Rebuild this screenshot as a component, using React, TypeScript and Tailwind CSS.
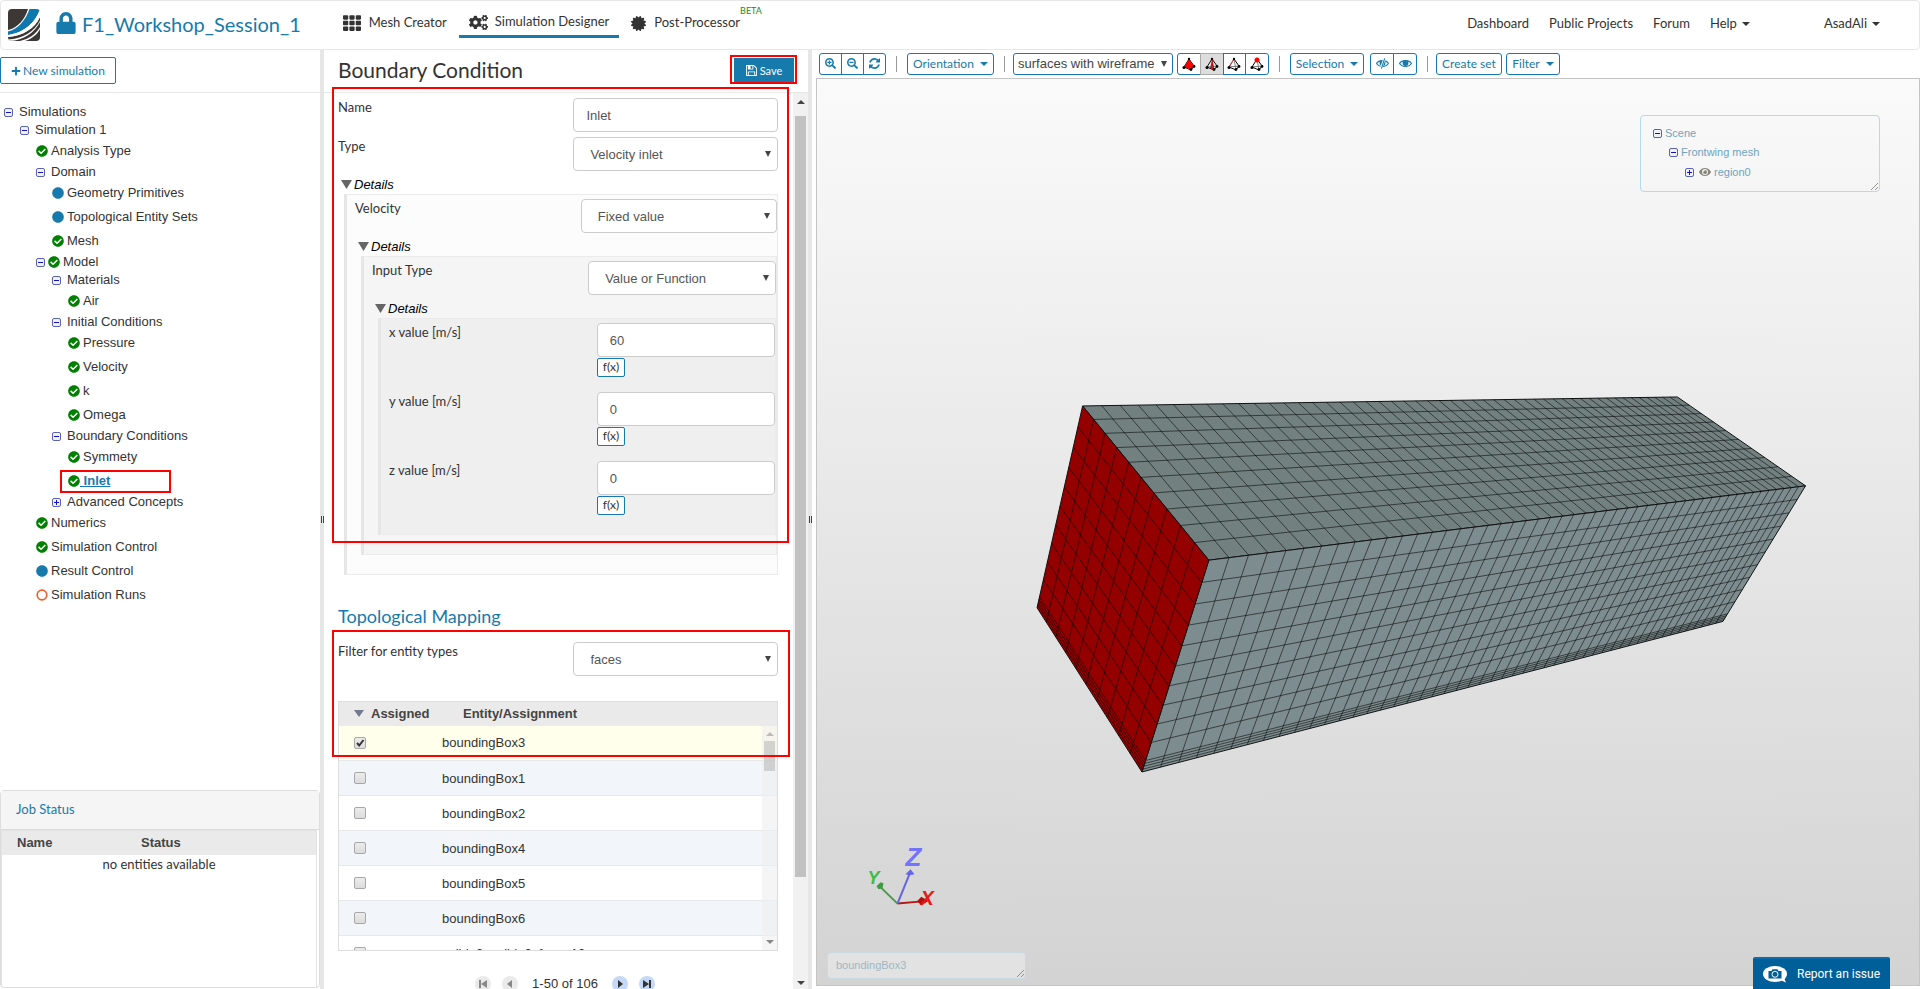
import React, { useState } from 'react';
import {
  FaCertificate,
  FaCheckCircle,
  FaCircle,
  FaCogs,
  FaEye,
  FaLock,
  FaPlus,
  FaSearchMinus,
  FaSearchPlus,
  FaTh,
} from 'react-icons/fa';

type TreeNode = {
  label: string;
  level: number;
  toggle?: 'open' | 'closed';
  status?: 'ok' | 'info' | 'empty';
  selected?: boolean;
};

const treeNodes: TreeNode[] = [
  { label: 'Simulations', level: 0, toggle: 'open' },
  { label: 'Simulation 1', level: 1, toggle: 'open' },
  { label: 'Analysis Type', level: 2, status: 'ok' },
  { label: 'Domain', level: 2, toggle: 'open' },
  { label: 'Geometry Primitives', level: 3, status: 'info' },
  { label: 'Topological Entity Sets', level: 3, status: 'info' },
  { label: 'Mesh', level: 3, status: 'ok' },
  { label: 'Model', level: 2, toggle: 'open', status: 'ok' },
  { label: 'Materials', level: 3, toggle: 'open' },
  { label: 'Air', level: 4, status: 'ok' },
  { label: 'Initial Conditions', level: 3, toggle: 'open' },
  { label: 'Pressure', level: 4, status: 'ok' },
  { label: 'Velocity', level: 4, status: 'ok' },
  { label: 'k', level: 4, status: 'ok' },
  { label: 'Omega', level: 4, status: 'ok' },
  { label: 'Boundary Conditions', level: 3, toggle: 'open' },
  { label: 'Symmety', level: 4, status: 'ok' },
  { label: 'Inlet', level: 4, status: 'ok', selected: true },
  { label: 'Advanced Concepts', level: 3, toggle: 'closed' },
  { label: 'Numerics', level: 2, status: 'ok' },
  { label: 'Simulation Control', level: 2, status: 'ok' },
  { label: 'Result Control', level: 2, status: 'info' },
  { label: 'Simulation Runs', level: 2, status: 'empty' },
];

const indents = ['pl-1', 'pl-5', 'pl-9', 'pl-13', 'pl-17'];

const entities = [
  'boundingBox3',
  'boundingBox1',
  'boundingBox2',
  'boundingBox4',
  'boundingBox5',
  'boundingBox6',
  'solid_0_solid_0_face_10',
];

const Caret = () => (
  <svg viewBox="0 0 8 4" className="w-2 h-1 shrink-0" fill="currentColor" aria-hidden="true">
    <path d="M0 0h8L4 4z" />
  </svg>
);

const Logo = () => (
  <svg viewBox="0 0 32 32" className="w-8 h-8" aria-hidden="true">
    <defs>
      <clipPath id="logo-clip">
        <rect width="32" height="32" rx="4" />
      </clipPath>
    </defs>
    <g clipPath="url(#logo-clip)">
      <rect width="32" height="32" fill="#3d3835" />
      <path d="M0 21C10 19 17 10 20 0H32V8C27 19 15 27 0 28Z" fill="#fff" />
      <path d="M0 22.500C11 20 18 10 21.500 0H32C28 13 16 24 0 26Z" fill="#0d77ae" />
      <path d="M32 0C28 13 16 24 0 26V28C15 27 27 19 32 8Z" fill="#fff" />
      <path d="M0 30.500C15 30 27 22 32 11.500V13C27 23.500 15 31.500 2 32H0Z" fill="#fff" />
      <path d="M12 32C21 30 28 25 32 18V20C29 26 23 30 17 32Z" fill="#fff" />
    </g>
  </svg>
);

const SaveIcon = () => (
  <svg viewBox="128 128 1536 1536" className="w-[11px] h-[11px]" fill="currentColor" aria-hidden="true">
    <path d="M512 1536h768v-384H512v384zm896 0h128V640q0-14-10-38.500t-20-34.500l-281-281q-10-10-34-20t-39-10v416q0 40-28 68t-68 28H480q-40 0-68-28t-28-68V256H256v1280h128v-416q0-40 28-68t68-28h832q40 0 68 28t28 68v416zM1024 608V288q0-13-9.500-22.500T992 256H800q-13 0-22.500 9.500T768 288v320q0 13 9.500 22.500T800 640h192q13 0 22.500-9.500t9.500-22.500zm640 32v928q0 40-28 68t-68 28H224q-40 0-68-28t-28-68V224q0-40 28-68t68-28h928q40 0 88 20t76 48l280 280q28 28 48 76t20 88z" />
  </svg>
);

const RefreshIcon = () => (
  <svg viewBox="0 0 1536 1536" className="w-[11px] h-[11px]" fill="currentColor" aria-hidden="true">
    <path d="M1511 928q0 5-1 7-64 268-268 434.500T764 1536q-146 0-282.500-55T238 1324l-129 129q-19 19-45 19t-45-19-19-45V960q0-26 19-45t45-19h448q26 0 45 19t19 45-19 45l-137 137q71 66 161 102t187 36q134 0 250-65t186-179q11-17 53-117 8-23 30-23h192q13 0 22.500 9.500t9.500 22.500zm25-800v448q0 26-19 45t-45 19h-448q-26 0-45-19t-19-45 19-45l138-138Q969 256 768 256q-134 0-250 65T332 500q-11 17-53 117-8 23-30 23H50q-13 0-22.500-9.500T18 608v-7q65-268 270-434.500T768 0q146 0 284 55.500T1297 212l130-129q19-19 45-19t45 19 19 45z" />
  </svg>
);

const EyeIcon = ({ half = false }: { half?: boolean }) => (
  <svg viewBox="0 0 12 10" className="w-[13px] h-[11px]" fill="none" stroke="currentColor" aria-hidden="true">
    <path d="M.5 5C2.500 1.500 9.500 1.500 11.500 5 9.500 8.500 2.500 8.500.5 5Z" strokeWidth="1" />
    <circle cx="6" cy="4.500" r="2.700" fill="currentColor" stroke="none" />
    {half && <path d="M8 0L4.500 10" stroke="#fff" strokeWidth="2.200" />}
    {half && <path d="M8 .3L5 9.700" strokeWidth="1" />}
  </svg>
);

// Tetrahedron with the picked part (volume, face, edge, vertex) in red
const PickIcon = ({ mode }: { mode: string }) => (
  <svg viewBox="0 0 14 14" className="w-3.5 h-3.5" aria-hidden="true">
    <path d="M7 2L2 10L9 13L12 9Z" fill={mode === 'volume' ? '#f00' : '#fff'} stroke="#000" strokeWidth="1" />
    {mode === 'volume' && <path d="M7 2L2 10L9 13L12 9Z" fill="#f00" />}
    {mode === 'face' && <path d="M7 2L5 11L9 13Z" fill="#f00" />}
    {mode !== 'volume' && <path d="M2 10L12 9" stroke="#555" strokeWidth=".8" fill="none" />}
    {mode !== 'volume' && <path d="M7 2L9 13" stroke={mode === 'face' ? '#900' : '#666'} strokeWidth=".8" />}
    {mode === 'edge' && <path d="M7 2L2.500 9.500" stroke="#f44" strokeWidth="1" />}
    <circle cx="2" cy="10.500" r="1.500" />
    <circle cx="9" cy="12.500" r="1.400" />
    <circle cx="12" cy="9.500" r="1.400" />
    {mode === 'vertex' ? <circle cx="7" cy="3" r="2.500" fill="#f00" /> : <circle cx="7" cy="2" r="1.200" />}
  </svg>
);

const Toggle = ({ open }: { open: boolean }) => (
  <svg viewBox="0 0 9 9" className="w-[9px] h-[9px] shrink-0" aria-hidden="true">
    <rect x=".5" y=".5" width="8" height="8" rx="1.500" fill="#f0f2fa" stroke="#5a63b0" />
    <path d={open ? 'M2 4.500h5' : 'M2 4.500h5M4.500 2v5'} stroke="#1512b8" />
  </svg>
);

const StatusIcon = ({ status }: { status: string }) => {
  if (status === 'ok') return <FaCheckCircle className="w-3 h-3 shrink-0 text-[#008000]" />;
  if (status === 'info') return <FaCircle className="w-3 h-3 shrink-0 text-[#167aac]" />;
  return (
    <svg viewBox="0 0 12 12" className="w-3 h-3 shrink-0" aria-hidden="true">
      <circle cx="6" cy="6" r="4.800" fill="none" stroke="#e8622c" strokeWidth="1.700" />
    </svg>
  );
};

const TreeRow = ({ node }: { node: TreeNode }) => (
  <li className={`relative flex items-center ${node.toggle ? 'h-[18px]' : 'h-6'} ${indents[node.level]}`}>
    {node.toggle && (
      <button aria-label={`Toggle ${node.label}`} className={node.status ? 'mr-[3px]' : 'mr-1.5'}>
        <Toggle open={node.toggle === 'open'} />
      </button>
    )}
    {node.status && <StatusIcon status={node.status} />}
    {node.selected ? (
      <a href="#inlet" className="font-bold underline text-[#167aac] whitespace-pre">{' ' + node.label}</a>
    ) : (
      <a href="#node" className={node.status ? 'ml-[3px]' : ''}>{node.label}</a>
    )}
    {node.selected && <span className="absolute left-[60px] top-px w-[111px] h-[23px] border-2 border-[#f00] pointer-events-none" />}
  </li>
);

const fieldClass = 'block w-full h-[34px] pt-px bg-white border border-[#ccc] rounded text-[13px] text-[#555]';

const SelectBox = ({ id, value }: { id: string; value: string }) => (
  <div className="relative w-[46.5%]">
    <select id={id} defaultValue={value} className={`${fieldClass} appearance-none pl-4`}>
      <option>{value}</option>
    </select>
    <svg viewBox="0 0 6 6" className="absolute right-[7px] top-3.5 w-1.5 h-1.5 pointer-events-none" fill="#444" aria-hidden="true">
      <path d="M0 0h6L3 6z" />
    </svg>
  </div>
);

const FieldRow = ({ id, label, children }: { id: string; label: string; children: React.ReactNode }) => (
  <div className="flex justify-between">
    <label htmlFor={id} className="font-[Lato,sans-serif] leading-[18px] text-[#333]">{label}</label>
    {children}
  </div>
);

const Details = ({ shade, children }: { shade: string; children: React.ReactNode }) => (
  <div className="pt-[5px]">
    <button className="flex items-center gap-0.5 h-[18px] pl-[3px] italic text-black">
      <svg viewBox="0 0 11 9" className="w-[11px] h-[9px]" fill="#666" aria-hidden="true">
        <path d="M0 0h11L5.500 9z" />
      </svg>
      Details
    </button>
    <div className={`ml-1.5 pl-2 pt-1 border border-[#ebebeb] border-l-3 border-l-[#e6e6e6] ${shade}`}>{children}</div>
  </div>
);

const FunctionField = ({ axis, value }: { axis: string; value: string }) => (
  <div className="pb-[15px]">
    <FieldRow id={`${axis}-value`} label={`${axis} value [m/s]`}>
      <div className="w-[46.2%]">
        <input id={`${axis}-value`} defaultValue={value} className={`${fieldClass} px-3`} />
        <button className="mt-px block h-[19px] px-[5px] bg-white border border-[#167aac] rounded-xs font-[Lato,sans-serif] text-xs leading-none text-[#333]">
          f(x)
        </button>
      </div>
    </FieldRow>
  </div>
);

const Splitter = () => (
  <div className="w-1 shrink-0 bg-[#e6e6e6] flex items-center justify-center gap-px">
    <span className="w-px h-[7px] bg-[#444]" />
    <span className="w-px h-[7px] bg-[#444]" />
  </div>
);

const EntityTable = () => {
  const [checked, setChecked] = useState<string[]>(['boundingBox3']);
  const flip = (name: string) =>
    setChecked(checked.includes(name) ? checked.filter((n) => n !== name) : [...checked, name]);

  return (
    <div className="relative mt-[25px] h-[250px] border border-[#ddd] overflow-hidden">
      <table className="w-full table-fixed">
        <thead>
          <tr className="h-6 bg-[#eaeaea] text-left text-[#444]">
            <th className="w-[103px] p-0 pl-[15px]">
              <span className="flex items-center gap-[7px]">
                <svg viewBox="0 0 10 7" className="w-2.5 h-[7px]" fill="#717a90" aria-hidden="true">
                  <path d="M0 0h10L5 7z" />
                </svg>
                Assigned
              </span>
            </th>
            <th className="p-0 pl-[21px]">Entity/Assignment</th>
          </tr>
        </thead>
        <tbody>
          {entities.map((name, index) => (
            <tr
              key={name}
              className={`h-[35px] border-b border-[#e6e8ea] ${index === 0 ? 'bg-[#ffffec]' : index % 2 ? 'bg-[#f2f6fb]' : 'bg-white'}`}
            >
              <td className="p-0 pl-[15px]">
                <span className="relative block w-3 h-3">
                  <input
                    type="checkbox"
                    id={name}
                    checked={checked.includes(name)}
                    onChange={() => flip(name)}
                    className="peer block w-3 h-3 appearance-none rounded-xs border border-[#a8a8a8] bg-linear-to-b from-[#ececec] to-[#dcdcdc]"
                  />
                  <svg viewBox="0 0 12 12" className="hidden peer-checked:block absolute inset-0 pointer-events-none" fill="none" stroke="#333" strokeWidth="2" aria-hidden="true">
                    <path d="M3 6l2.200 2.500L9.500 3" />
                  </svg>
                </span>
              </td>
              <td className="p-0"><label htmlFor={name}>{name}</label></td>
            </tr>
          ))}
        </tbody>
      </table>
      {/* list scrollbar */}
      <div className="absolute right-0 top-6 bottom-0 w-[15px] bg-[#eee]/60 flex flex-col items-center py-1.5 text-[#888]">
        <svg viewBox="0 0 8 4" className="w-2 h-1" fill="#bbb" aria-hidden="true"><path d="M0 4h8L4 0z" /></svg>
        <div className="mt-[5px] w-[11px] h-[30px] bg-[#bbb]/60" />
        <div className="grow" />
        <Caret />
      </div>
    </div>
  );
};

const Pager = () => {
  const round = 'w-4 h-4 rounded-full flex items-center justify-center';
  return (
    <div className="mt-[25px] flex items-center justify-center gap-[11px] pl-3.5">
      <button aria-label="First page" disabled className={`${round} bg-[#eaeaea] text-[#888]`}>
        <svg viewBox="0 0 8 8" className="w-2 h-2" fill="currentColor"><path d="M0 0h2v8H0zM8 0v8L2 4z" /></svg>
      </button>
      <button aria-label="Previous page" disabled className={`${round} bg-[#eaeaea] text-[#888]`}>
        <svg viewBox="0 0 8 8" className="w-2 h-2" fill="currentColor"><path d="M6 0v8L1 4z" /></svg>
      </button>
      <span className="px-[3px] leading-4 text-[#333]">1-50 of 106</span>
      <button aria-label="Next page" className={`${round} bg-[#c5d9f7] text-[#333]`}>
        <svg viewBox="0 0 8 8" className="w-2 h-2" fill="currentColor"><path d="M2 0v8l5-4z" /></svg>
      </button>
      <button aria-label="Last page" className={`${round} bg-[#c5d9f7] text-[#333]`}>
        <svg viewBox="0 0 8 8" className="w-2 h-2" fill="currentColor"><path d="M6 0h2v8H6zM0 0v8l6-4z" /></svg>
      </button>
    </div>
  );
};

type Point = [number, number];

// Projective map of the unit square onto a quad given as corners (0,0) (1,0) (1,1) (0,1)
const projector = ([p0, p1, p2, p3]: Point[]) => {
  const dx1 = p1[0] - p2[0];
  const dx2 = p3[0] - p2[0];
  const dy1 = p1[1] - p2[1];
  const dy2 = p3[1] - p2[1];
  const sx = p0[0] - p1[0] + p2[0] - p3[0];
  const sy = p0[1] - p1[1] + p2[1] - p3[1];
  const den = dx1 * dy2 - dx2 * dy1;
  const g = (sx * dy2 - dx2 * sy) / den;
  const h = (dx1 * sy - sx * dy1) / den;
  return (u: number, v: number) => {
    const w = 1 + g * u + h * v;
    const x = (p0[0] + (p1[0] * (1 + g) - p0[0]) * u + (p3[0] * (1 + h) - p0[0]) * v) / w;
    const y = (p0[1] + (p1[1] * (1 + g) - p0[1]) * u + (p3[1] * (1 + h) - p0[1]) * v) / w;
    return `${x.toFixed(1)} ${y.toFixed(1)}`;
  };
};

const even = (n: number) => Array.from({ length: n - 1 }, (_, i) => (i + 1) / n);

// Cells get thin close to the ground
const layers = [...Array.from({ length: 10 }, (_, i) => (i + 1) * 0.094), 0.955, 0.97, 0.985];

const MeshFace = ({ corners, us, vs, fill }: { corners: Point[]; us: number[]; vs: number[]; fill: string }) => {
  const at = projector(corners);
  const lines = [
    ...us.map((u) => `M${at(u, 0)}L${at(u, 1)}`),
    ...vs.map((v) => `M${at(0, v)}L${at(1, v)}`),
  ].join('');
  return (
    <g>
      <polygon points={corners.join(' ')} fill={fill} stroke="#111" strokeWidth="1" strokeLinejoin="round" />
      <path d={lines} stroke="#000" strokeOpacity=".55" strokeWidth="1" fill="none" />
    </g>
  );
};

const MeshView = () => {
  const a: Point = [265.3, 327.3];
  const b: Point = [219.7, 529.3];
  const c: Point = [324.7, 693.700];
  const d: Point = [391.7, 481.7];
  const e: Point = [860.7, 318.3];
  const f: Point = [989, 407.3];
  const g: Point = [906.3, 543];
  return (
    <svg viewBox="0 0 1102 907" className="block w-full h-full" aria-label="Mesh of the front wing domain">
      <MeshFace corners={[a, e, f, d]} us={even(50)} vs={even(10)} fill="#728080" />
      <MeshFace corners={[d, f, g, c]} us={even(50)} vs={layers} fill="#7d8c8e" />
      <MeshFace corners={[a, d, c, b]} us={even(10)} vs={layers} fill="#940000" />
      {/* orientation axes */}
      <g strokeWidth="2" fontFamily="Liberation Sans, sans-serif" fontWeight="bold" fontStyle="italic">
        <path d="M80 825.500L63 809" stroke="#4a9a4a" />
        <path d="M59 808l4-4 3 1-1 5-4 1z" fill="#3f9a45" />
        <path d="M80 825.500L102 823.500" stroke="#b01818" />
        <path d="M101 823l3-3 5 3-5 3z" fill="#b01010" stroke="#b01010" />
        <path d="M80 825.500L92 796" stroke="#6464e0" />
        <path d="M88 796l5-5 4 5-5 1z" fill="#6464f0" />
        <text x="50" y="806" fontSize="18" fill="#44bb44">Y</text>
        <text x="103" y="827" fontSize="20" fill="#e81818">X</text>
        <text x="88" y="788" fontSize="26" fill="#7373ff">Z</text>
      </g>
    </svg>
  );
};

const ResizeGrip = () => (
  <svg viewBox="0 0 8 8" className="absolute right-px bottom-px w-2 h-2" stroke="#777" strokeWidth=".8" aria-hidden="true">
    <path d="M1 8l7-7M5 8l3-3" />
  </svg>
);

const toolButton = 'h-[22px] flex items-center justify-center bg-white border border-[#167aac] text-[#167aac]';
const Separator = () => <div className="mx-2.5 w-px h-4 bg-[#999]" />;

const Toolbar = () => (
  <div className="flex items-center h-7 pl-[3px] font-[Lato,sans-serif] text-xs">
    <div className="flex w-[67px] -space-x-px">
      <button aria-label="Zoom in" className={`${toolButton} grow rounded-l-[3px]`}><FaSearchPlus className="w-[11px] h-[11px]" /></button>
      <button aria-label="Zoom out" className={`${toolButton} grow`}><FaSearchMinus className="w-[11px] h-[11px]" /></button>
      <button aria-label="Reset view" className={`${toolButton} grow rounded-r-[3px]`}><RefreshIcon /></button>
    </div>
    <Separator />
    <button className={`${toolButton} w-[87px] gap-1.5 rounded-[3px]`}>Orientation <Caret /></button>
    <Separator />
    <div className="relative -ml-0.5 w-[160px]">
      <select
        aria-label="Render mode"
        className="block w-full h-[22px] pl-1 appearance-none bg-white border border-[#167aac] rounded-[3px] font-[Liberation_Sans,sans-serif] text-[13px] text-[#444]"
      >
        <option>surfaces with wireframe</option>
      </select>
      <svg viewBox="0 0 6 6" className="absolute right-1.5 top-2 w-1.5 h-1.5 pointer-events-none" fill="#444" aria-hidden="true">
        <path d="M0 0h6L3 6z" />
      </svg>
    </div>
    <div className="ml-1 flex w-[92px] -space-x-px">
      <button aria-label="Pick volumes" className={`${toolButton} grow rounded-l-[3px]`}><PickIcon mode="volume" /></button>
      <button aria-label="Pick faces" className="h-[22px] grow flex items-center justify-center bg-[#ddd] border border-[#aaa]"><PickIcon mode="face" /></button>
      <button aria-label="Pick edges" className={`${toolButton} grow`}><PickIcon mode="edge" /></button>
      <button aria-label="Pick vertices" className={`${toolButton} grow rounded-r-[3px]`}><PickIcon mode="vertex" /></button>
    </div>
    <Separator />
    <button className={`${toolButton} w-[74px] gap-1.5 rounded-[3px]`}>Selection <Caret /></button>
    <div className="ml-1.5 flex w-[47px] -space-x-px">
      <button aria-label="Hide selection" className={`${toolButton} grow rounded-l-[3px]`}><EyeIcon half /></button>
      <button aria-label="Show all" className={`${toolButton} grow rounded-r-[3px]`}><EyeIcon /></button>
    </div>
    <Separator />
    <button className={`${toolButton} -ml-0.5 w-[66px] rounded-[3px]`}>Create set</button>
    <button className={`${toolButton} ml-1 w-[54px] gap-1.5 rounded-[3px]`}>Filter <Caret /></button>
  </div>
);

const Header = () => (
  <header className="flex h-[50px] shrink-0 border border-[#e7e7e7] rounded font-[Lato,sans-serif] text-[13px] text-[#333]">
    <div className="flex items-center pl-[7px] pb-px">
      <Logo />
      <FaLock className="ml-4 w-5 h-[22px] mb-1 text-[#167aac]" />
      <a href="#project" className="ml-1.5 mb-0.5 text-xl text-[#167aac]">F1_Workshop_Session_1</a>
    </div>
    <nav className="flex items-start ml-8 pt-2 whitespace-nowrap">
      <a href="#mesh" className="flex items-center gap-2 h-7 px-2.5">
        <FaTh className="w-[18px] h-[18px]" />
        Mesh Creator
      </a>
      <a href="#designer" className="flex items-center gap-[7px] h-[29px] px-2.5 ml-0.5 border-b-3 border-[#167aac]">
        <FaCogs className="w-[19px] h-[19px]" />
        Simulation Designer
      </a>
      <a href="#post" className="flex items-center gap-2 h-7 pl-3">
        <FaCertificate className="w-[15px] h-[15px]" />
        Post-Processor
      </a>
      <sup className="text-[9px] leading-none text-[#1a8a1a] top-0 -mt-[3px]">BETA</sup>
    </nav>
    <nav className="ml-auto flex items-center gap-5 pr-[39px] pb-0.5">
      <a href="#dashboard">Dashboard</a>
      <a href="#public">Public Projects</a>
      <a href="#forum">Forum</a>
      <a href="#help" className="flex items-center gap-[5px]">Help <Caret /></a>
      <a href="#user" className="ml-[54px] flex items-center gap-[5px]">AsadAli <Caret /></a>
    </nav>
  </header>
);

const App = () => {
  return (
    <div className="h-screen flex flex-col overflow-hidden bg-white font-[Liberation_Sans,sans-serif] text-[13px] text-[#333]">
      <Header />

      <div className="flex grow min-h-0">
        {/* Simulation tree */}
        <aside className="w-80 shrink-0 flex flex-col">
          <div className="h-[43px] pt-[7px] border-b border-[#e7e7e7]">
            <button className="flex items-center justify-center gap-0.5 w-[116px] h-[27px] border border-[#167aac] rounded-xs font-[Lato,sans-serif] text-xs text-[#167aac]">
              <FaPlus className="w-2.5 h-2.5" />
              New simulation
            </button>
          </div>
          <ul className="pt-2.5">
            {treeNodes.map((node) => (
              <TreeRow key={`${node.level}-${node.label}`} node={node} />
            ))}
          </ul>
          <section className="mt-auto mb-px h-[198px] border border-[#ddd] rounded">
            <h2 className="h-[39px] px-[15px] flex items-center bg-[#f5f5f5] border-b border-[#ddd] font-[Lato,sans-serif] text-[13px] text-[#167aac]">
              Job Status
            </h2>
            <div className="h-[157px] mr-0.5 border-x border-t border-[#e3e3e3]">
              <table className="w-full table-fixed">
                <thead>
                  <tr className="h-6 bg-[#eaeaea] text-left text-[#444]">
                    <th className="w-[124px] p-0 pl-[15px]">Name</th>
                    <th className="p-0 pl-[15px]">Status</th>
                  </tr>
                </thead>
                <tbody>
                  <tr>
                    <td colSpan={2} className="p-0 text-center font-[Lato,sans-serif] leading-[18px]">no entities available</td>
                  </tr>
                </tbody>
              </table>
            </div>
          </section>
        </aside>

        <Splitter />

        {/* Boundary condition form */}
        <section className="relative w-[484px] shrink-0 flex flex-col">
          <div className="flex items-center justify-between h-[43px] px-3.5 border-b border-[#e7e7e7]">
            <h1 className="pb-0.5 font-[Lato,sans-serif] text-[21px]">Boundary Condition</h1>
            <button className="flex items-center justify-center gap-[3px] w-[60px] h-[25px] bg-[#167aac] font-[Lato,sans-serif] text-[11px] text-white">
              <SaveIcon />
              Save
            </button>
          </div>
          <div className="flex grow min-h-0">
            <div className="grow overflow-hidden pt-[5px] pl-3.5 pr-[15px]">
              <div className="flex flex-col gap-[5px]">
                <FieldRow id="name" label="Name">
                  <div className="w-[46.5%]">
                    <input id="name" defaultValue="Inlet" className={`${fieldClass} px-3`} />
                  </div>
                </FieldRow>
                <FieldRow id="type" label="Type">
                  <SelectBox id="type" value="Velocity inlet" />
                </FieldRow>
              </div>
              <Details shade="bg-[#fcfcfc] pb-[19px]">
                <FieldRow id="velocity" label="Velocity">
                  <SelectBox id="velocity" value="Fixed value" />
                </FieldRow>
                <Details shade="bg-[#f5f5f5] pb-[19px]">
                  <FieldRow id="input-type" label="Input Type">
                    <SelectBox id="input-type" value="Value or Function" />
                  </FieldRow>
                  <Details shade="bg-[#efefef] pb-1">
                    <FunctionField axis="x" value="60" />
                    <FunctionField axis="y" value="0" />
                    <FunctionField axis="z" value="0" />
                  </Details>
                </Details>
              </Details>
              <h2 className="mt-[29px] mb-3.5 font-[Lato,sans-serif] text-lg leading-6 text-[#167aac]">Topological Mapping</h2>
              <FieldRow id="filter" label="Filter for entity types">
                <SelectBox id="filter" value="faces" />
              </FieldRow>
              <EntityTable />
              <Pager />
            </div>
            {/* panel scrollbar */}
            <div className="w-[15px] shrink-0 bg-[#f1f1f1] flex flex-col items-center pt-[7px] pb-1 text-[#444]">
              <svg viewBox="0 0 8 4" className="w-2 h-1" fill="currentColor" aria-hidden="true"><path d="M0 4h8L4 0z" /></svg>
              <div className="mt-3 w-[11px] h-[86%] bg-[#c1c1c1]" />
              <div className="grow" />
              <Caret />
            </div>
          </div>
          <span className="absolute left-[406px] top-[5px] w-[67px] h-[29px] border-2 border-[#f00] pointer-events-none" />
          <span className="absolute left-2 top-[37px] w-[457px] h-[456px] border-2 border-[#f00] pointer-events-none" />
          <span className="absolute left-2 top-[580px] w-[458px] h-[127px] border-2 border-[#f00] pointer-events-none" />
        </section>

        <Splitter />

        {/* 3D viewer */}
        <main className="grow min-w-0 flex flex-col pl-1 pb-[3px]">
          <Toolbar />
          <div className="relative grow min-h-0 border border-[#c4c4c4] bg-linear-to-b from-[#fafafa] to-[#d3d3d3]">
            <MeshView />
            <ul className="absolute right-[39px] top-9 w-[240px] h-[77px] pl-3 pt-2 border border-[#b5dbe8] rounded text-[11px] text-[#6fa3c0]">
              <li className="flex items-center gap-[3px] h-[19px]"><Toggle open />Scene</li>
              <li className="flex items-center gap-[3px] h-[19px] pl-4"><Toggle open />Frontwing mesh</li>
              <li className="flex items-center gap-[3px] h-[21px] pl-8">
                <Toggle open={false} />
                <FaEye className="w-3 h-3 ml-0.5 text-[#858578]" />
                region0
              </li>
              <ResizeGrip />
            </ul>
            <div className="absolute left-2.5 bottom-1.5 w-[199px] h-[27px] pl-2 flex items-center border border-[#c9dbe2] rounded bg-[#e2e2e2] text-[11px] text-[#9fb7c3]">
              boundingBox3
              <ResizeGrip />
            </div>
          </div>
        </main>
      </div>

      <button className="fixed right-[30px] bottom-0 w-[137px] h-8 pl-2.5 flex items-center gap-2.5 bg-[#005f99] border-t-2 border-[#0a6cab] rounded-t-xs font-[Roboto,sans-serif] text-xs text-white">
        <svg viewBox="0 0 24 17" className="w-6 h-[17px]" aria-hidden="true">
          <ellipse cx="12" cy="8" rx="12" ry="8" fill="#fff" />
          <path d="M17 14l6 2.500-2-5z" fill="#fff" />
          <path d="M5.500 5h3l1-1.700h5L15.500 5h3v7.500h-13z" fill="#005f99" />
          <circle cx="12" cy="8.300" r="3" fill="none" stroke="#fff" />
        </svg>
        Report an issue
      </button>
    </div>
  );
};

export default App;
